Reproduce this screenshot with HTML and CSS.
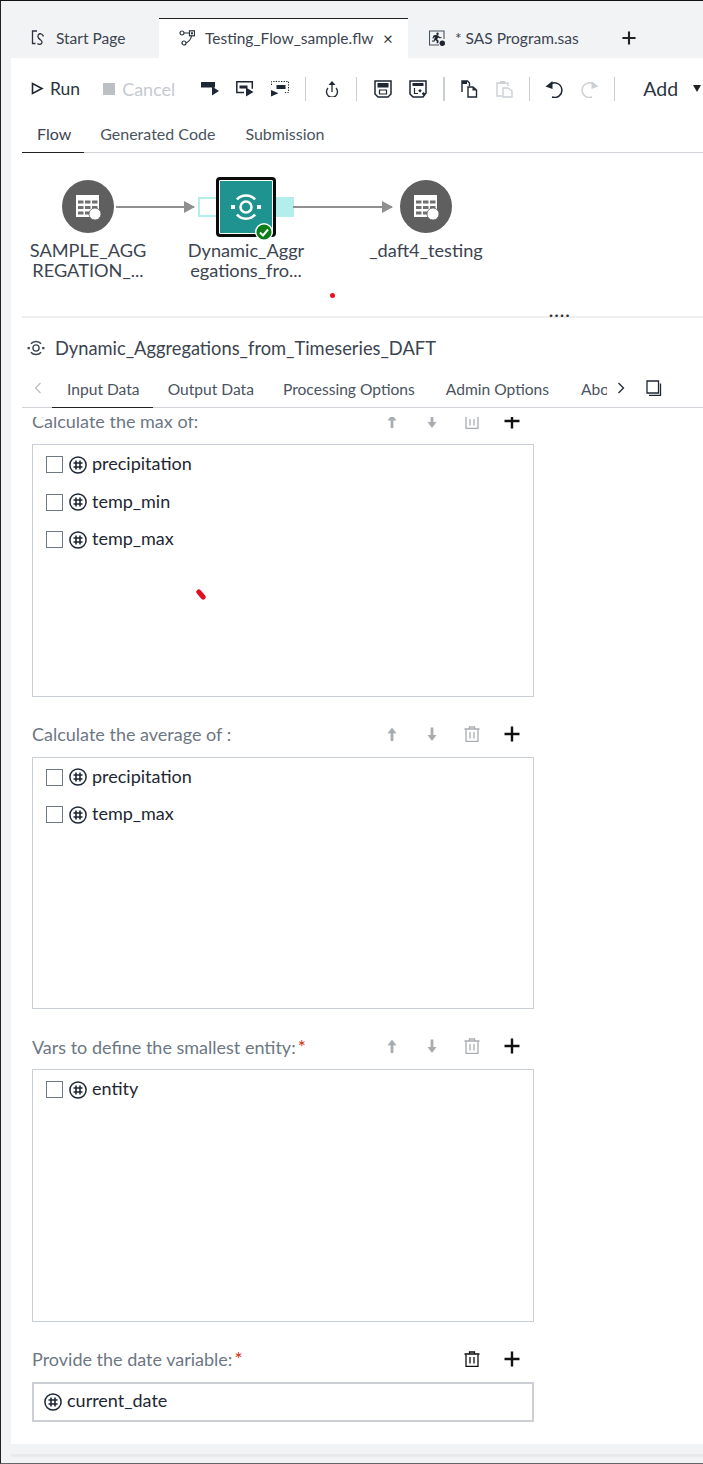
FILE: index.html
```html
<!DOCTYPE html>
<html lang="en">
<head>
<meta charset="utf-8">
<title>Testing_Flow_sample.flw</title>
<link rel="stylesheet" href="styles.css">
</head>
<body>
<svg class="defs" width="0" height="0" aria-hidden="true">
  <symbol id="i-table" viewBox="0 0 26 26">
    <path fill="#fff" d="M1 1h23v22H1z"/>
    <path fill="#6f6f6f" d="M3 6.500h5.500v3H3zM10 6.500h5.500v3H10zM17 6.500h5.500v3H17zM3 12h5.500v3H3zM10 12h5.500v3H10zM17 12h5.500v3H17zM3 17.500h5.500v3H3zM10 17.500h5.500v3H10z"/>
    <circle cx="20" cy="20" r="6" fill="#fff" stroke="#5f5f5f" stroke-width=".8"/>
  </symbol>
  <symbol id="i-step" viewBox="0 0 32 32">
    <circle cx="16" cy="16" r="5.500" fill="none" stroke="currentColor" stroke-width="2.500"/>
    <path fill="currentColor" d="M1 14h4v4H1zM27 14h4v4h-4z"/>
    <path fill="none" stroke="currentColor" stroke-width="2.500" d="M7 8.500C11 3 21 3 25 8.500M7 23.500C11 29 21 29 25 23.500"/>
  </symbol>
  <symbol id="i-hash" viewBox="0 0 18 18">
    <circle cx="9" cy="9" r="8.100" fill="none" stroke="currentColor" stroke-width="1.500"/>
    <path fill="none" stroke="currentColor" stroke-width="1.600" d="M7 4.500v9M11 4.500v9M4.500 7h9M4.500 11h9"/>
  </symbol>
  <symbol id="i-up" viewBox="0 0 16 16">
    <path fill="currentColor" d="M8 1.500l4.500 6H9.400V15H6.600V7.500H3.500z"/>
  </symbol>
  <symbol id="i-down" viewBox="0 0 16 16">
    <path fill="currentColor" d="M8 15l4.500-6H9.400V1.500H6.600V9H3.500z"/>
  </symbol>
  <symbol id="i-trash" viewBox="0 0 16 16">
    <path fill="none" stroke="currentColor" stroke-width="1.300" d="M.5 3h15M5.500 3V1h5v2M2 3v12.300h12V3M6 6v6.500M10 6v6.500"/>
  </symbol>
  <symbol id="i-plus" viewBox="0 0 16 16">
    <path fill="currentColor" d="M6.800 .5h2.400v6.300h6.300v2.400H9.200v6.300H6.800V9.200H.5V6.800h6.300z"/>
  </symbol>
</svg>

<div class="window">
  <header class="doc-tabs">
    <div class="doc-tab doc-tab-start">
      <svg class="tab-icon" viewBox="0 0 16 16" width="16" height="16"><path fill="none" stroke="#2b3440" stroke-width="1.300" d="M6 1H1.500v12.500H4.500M10.500 4C7.500 3 6 6 7.500 8s4 2.500 3.500 4.500-3 2.500-4.500 1M12.500 6.500C12 5 11.300 4.500 10.500 4"/></svg>
      <span>Start Page</span>
    </div>
    <div class="doc-tab doc-tab-active">
      <svg class="tab-icon" viewBox="0 0 16 16" width="16" height="16"><g fill="none" stroke="#2b3440" stroke-width="1.200"><circle cx="3" cy="3" r="2"/><rect x="10.500" y=".8" width="5" height="5"/><circle cx="5" cy="13" r="2"/><path d="M5 3h5.500M12.500 5.800C12 10 9 12 7 13"/></g><rect x="12" y="2.300" width="2" height="2" fill="#2b3440"/></svg>
      <span class="doc-tab-name">Testing_Flow_sample.flw</span>
      <span class="doc-close">×</span>
    </div>
    <div class="doc-tab doc-tab-sas">
      <svg class="tab-icon" viewBox="0 0 16 16" width="16" height="16"><path fill="none" stroke="#4a5360" stroke-width="1.100" d="M15 9V1H.5v14H10"/><path fill="#1c2530" d="M8.500 2.500a1.200 1.200 0 1 1 .1 2.400 1.200 1.200 0 0 1-.1-2.400zM4.500 5.500l3-.8 2 1 1.500 1.500 1.500-.3v1l-2 .4-1.500-.8-.8 2 1.500 1.300-.5 2.500H7.600l.2-2-1.600-1.200-1 1.700-2.200-.2v-1l1.500.1 1.500-3.500-1.200.3-.6 1.200-.8-.4z"/><circle cx="13.300" cy="13.300" r="2.700" fill="#1c2530"/></svg>
      <span>* SAS Program.sas</span>
    </div>
    <svg class="doc-add" viewBox="0 0 16 16" width="14" height="14"><use href="#i-plus"/></svg>
  </header>

  <main class="workspace">
    <div class="toolbar">
      <button class="tool-text">
        <svg viewBox="0 0 13 13" width="13" height="13"><path fill="none" stroke="#1e2733" stroke-width="1.600" d="M1.500 1.500v10l9.500-5z"/></svg>
        <span>Run</span>
      </button>
      <button class="tool-text tool-disabled tool-cancel">
        <span class="stop-square"></span>
        <span>Cancel</span>
      </button>
      <div class="tool-group tool-group-run">
        <svg viewBox="0 0 18 16" width="18" height="16"><path fill="#1e2733" d="M0 1h14v5.500H0zM11 5.500l7 4.500-7 4.500z"/></svg>
        <svg viewBox="0 0 18 16" width="18" height="16"><path fill="none" stroke="#1e2733" stroke-width="1.500" d="M8 11.500H.8V.8h15.500v7"/><path fill="#1e2733" d="M3.500 4.500h8v3h-8zM10 6.500l7.500 4.500-7.500 4.500z"/></svg>
        <svg viewBox="0 0 18 16" width="18" height="16"><path fill="none" stroke="#1e2733" stroke-dasharray="1.300 1.300" d="M.5 4V.5h17v11H13"/><path fill="#1e2733" d="M5.500 4h9v4h-9zM0 9l7.500 3.300L0 15.500z"/></svg>
      </div>
      <span class="tool-sep tool-sep-a"></span>
      <svg class="tool-upload" viewBox="0 0 14 16" width="14" height="16"><path fill="none" stroke="#1e2733" stroke-width="1.300" d="M3 7a5.500 5.500 0 1 0 8 0"/><path fill="none" stroke="#1e2733" stroke-width="1.300" d="M7 11V2"/><path fill="#1e2733" d="M7 0l3.500 4h-7z"/></svg>
      <span class="tool-sep tool-sep-b"></span>
      <div class="tool-group tool-group-save">
        <svg viewBox="0 0 18 18" width="18" height="18"><path fill="none" stroke="#1e2733" stroke-width="1.500" d="M1 1h16v13l-3 3H4l-3-3z"/><path fill="#1e2733" d="M3.500 3h11v4.500h-11z"/><path fill="none" stroke="#1e2733" stroke-width="1.200" d="M5.500 10h7v4h-7z"/></svg>
        <svg viewBox="0 0 18 18" width="18" height="18"><path fill="none" stroke="#1e2733" stroke-width="1.500" d="M1 1h16v12l-3 4H4l-3-3z"/><path fill="#1e2733" d="M3.500 3h11v3h-11zM11 9l1.800 1.800L11 12.600l-1.800-1.800zM14.500 12l1.800 1.800-1.800 1.800-1.800-1.800z"/><path fill="none" stroke="#1e2733" stroke-width="1.200" d="M5.500 8v5.500H9"/></svg>
      </div>
      <span class="tool-sep tool-sep-c"></span>
      <div class="tool-group tool-group-clip">
        <svg viewBox="0 0 17 18" width="17" height="18"><path fill="none" stroke="#1e2733" stroke-width="1.400" d="M1 12V1h5.500l2 2v3M7 7h5l3.500 3v7H7z"/><path fill="#1e2733" d="M1 1h5v3H1zM11.500 7l4 3.500h-4z"/></svg>
        <svg viewBox="0 0 17 18" width="17" height="18"><path fill="none" stroke="#ccd0d5" stroke-width="1.400" d="M6 16H1V3h11v3M7 8h5l4 3v6H7z"/><path fill="#ccd0d5" d="M4 1h5v3H4z"/></svg>
      </div>
      <span class="tool-sep tool-sep-d"></span>
      <div class="tool-group tool-group-undo">
        <svg viewBox="0 0 19 18" width="19" height="18"><path fill="none" stroke="#1e2733" stroke-width="1.500" d="M5 4.500a7.300 7.300 0 1 1 2 12.500"/><path fill="#1e2733" d="M.5 6.500L7.500 1v8z"/></svg>
        <svg viewBox="0 0 19 18" width="19" height="18"><path fill="none" stroke="#ccd0d5" stroke-width="1.500" d="M14 4.500a7.300 7.300 0 1 0-2 12.500"/><path fill="#ccd0d5" d="M18.500 6.500L11.500 1v8z"/></svg>
      </div>
      <span class="tool-sep tool-sep-e"></span>
      <span class="tool-add">Add</span>
      <span class="tool-caret"></span>
    </div>

    <nav class="sub-tabs">
      <span class="sub-tab sub-tab-active">Flow</span>
      <span class="sub-tab">Generated Code</span>
      <span class="sub-tab">Submission</span>
    </nav>

    <section class="canvas">
      <div class="node-circle node-a"><svg width="26" height="26"><use href="#i-table"/></svg></div>
      <div class="edge edge-a"></div>
      <div class="port port-in"></div>
      <div class="step">
        <svg class="step-icon" width="32" height="32"><use href="#i-step"/></svg>
        <svg class="step-ok" viewBox="0 0 18 18" width="18" height="18"><circle cx="9" cy="9" r="8.300" fill="#0d7d1a" stroke="#fff" stroke-width="1.400"/><path fill="none" stroke="#fff" stroke-width="2" d="M5 9.500l3 3 5-6"/></svg>
      </div>
      <div class="port port-out"></div>
      <div class="edge edge-b"></div>
      <div class="node-circle node-c"><svg width="26" height="26"><use href="#i-table"/></svg></div>
      <div class="node-label label-a">SAMPLE_AGG<br>REGATION_...</div>
      <div class="node-label label-b">Dynamic_Aggr<br>egations_fro...</div>
      <div class="node-label label-c">_daft4_testing</div>
      <span class="red-dot"></span>
      <span class="grip">....</span>
    </section>

    <div class="panel-title">
      <svg class="panel-icon" width="18" height="18"><use href="#i-step"/></svg>
      <span>Dynamic_Aggregations_from_Timeseries_DAFT</span>
    </div>

    <nav class="panel-tabs">
      <svg class="chev chev-left" viewBox="0 0 8 12" width="8" height="12"><path fill="none" stroke="#b9bec5" stroke-width="1.300" d="M6.500 1L1.500 6l5 5"/></svg>
      <span class="panel-tab panel-tab-active">Input Data</span>
      <span class="panel-tab panel-tab-output">Output Data</span>
      <span class="panel-tab panel-tab-processing">Processing Options</span>
      <span class="panel-tab panel-tab-admin">Admin Options</span>
      <span class="panel-tab panel-tab-cut">About</span>
      <svg class="chev chev-right" viewBox="0 0 8 12" width="8" height="12"><path fill="none" stroke="#1e2733" stroke-width="1.300" d="M1.500 1l5 5-5 5"/></svg>
      <svg class="panel-copy" viewBox="0 0 16 16" width="16" height="16"><path fill="none" stroke="#1e2733" stroke-width="1.300" d="M1 1h11.500v12H1z"/><path fill="none" stroke="#1e2733" stroke-width="1.300" d="M14.500 3.500v11.800H3"/></svg>
    </nav>

    <div class="form-view">
      <div class="form">
        <div class="field">
          <div class="field-head">
            <span class="field-label">Calculate the max of:</span>
            <div class="field-actions">
              <svg class="muted" width="16" height="16"><use href="#i-up"/></svg>
              <svg class="muted" width="16" height="16"><use href="#i-down"/></svg>
              <svg class="muted" width="16" height="16"><use href="#i-trash"/></svg>
              <svg width="16" height="16"><use href="#i-plus"/></svg>
            </div>
          </div>
          <ul class="var-list">
            <li class="var"><span class="check"></span><svg width="18" height="18"><use href="#i-hash"/></svg><span class="var-name">precipitation</span></li>
            <li class="var"><span class="check"></span><svg width="18" height="18"><use href="#i-hash"/></svg><span class="var-name">temp_min</span></li>
            <li class="var"><span class="check"></span><svg width="18" height="18"><use href="#i-hash"/></svg><span class="var-name">temp_max</span></li>
          </ul>
        </div>
        <div class="field">
          <div class="field-head">
            <span class="field-label">Calculate the average of :</span>
            <div class="field-actions">
              <svg class="muted" width="16" height="16"><use href="#i-up"/></svg>
              <svg class="muted" width="16" height="16"><use href="#i-down"/></svg>
              <svg class="muted" width="16" height="16"><use href="#i-trash"/></svg>
              <svg width="16" height="16"><use href="#i-plus"/></svg>
            </div>
          </div>
          <ul class="var-list">
            <li class="var"><span class="check"></span><svg width="18" height="18"><use href="#i-hash"/></svg><span class="var-name">precipitation</span></li>
            <li class="var"><span class="check"></span><svg width="18" height="18"><use href="#i-hash"/></svg><span class="var-name">temp_max</span></li>
          </ul>
        </div>
        <div class="field">
          <div class="field-head">
            <span class="field-label">Vars to define the smallest entity:<span class="req">*</span></span>
            <div class="field-actions">
              <svg class="muted" width="16" height="16"><use href="#i-up"/></svg>
              <svg class="muted" width="16" height="16"><use href="#i-down"/></svg>
              <svg class="muted" width="16" height="16"><use href="#i-trash"/></svg>
              <svg width="16" height="16"><use href="#i-plus"/></svg>
            </div>
          </div>
          <ul class="var-list">
            <li class="var"><span class="check"></span><svg width="18" height="18"><use href="#i-hash"/></svg><span class="var-name">entity</span></li>
          </ul>
        </div>
        <div class="field">
          <div class="field-head">
            <span class="field-label">Provide the date variable:<span class="req">*</span></span>
            <div class="field-actions">
              <svg width="16" height="16"><use href="#i-trash"/></svg>
              <svg width="16" height="16"><use href="#i-plus"/></svg>
            </div>
          </div>
          <div class="date-input"><svg width="18" height="18"><use href="#i-hash"/></svg><span class="var-name">current_date</span></div>
        </div>
      </div>
      <span class="red-stroke"></span>
    </div>
  </main>
  <div class="h-scroll"></div>
</div>
</body>
</html>
```

FILE: styles.css
```css
* { box-sizing: border-box; }
html, body { margin: 0; padding: 0; }
body {
  width: 703px;
  height: 1464px;
  overflow: hidden;
  font-family: Lato, "Open Sans", sans-serif;
  color: #2b3440;
}
.defs { position: absolute; }
svg { display: block; flex: none; }
.window {
  position: relative;
  width: 703px;
  height: 1464px;
  display: flex;
  flex-direction: column;
  background: #f2f3f5;
  border-top: 1px solid #111;
  border-left: 1px solid #222;
  border-bottom: 1px solid #666;
}
.doc-tabs {
  height: 57px;
  flex: none;
  display: flex;
  align-items: flex-end;
  font-size: 15.500px;
  color: #3b4450;
}
.doc-tab {
  height: 40px;
  display: flex;
  align-items: center;
  white-space: nowrap;
}
.doc-tab-start { width: 158px; padding-left: 30px; gap: 9px; }
.doc-tab-active {
  width: 249px;
  padding: 0 0 1px 20px;
  gap: 10px;
  background: #fff;
  border-top: 1px solid #222;
}
.doc-tab-name { width: 178px; }
.doc-close { font-size: 17px; color: #333; margin-left: -10px; }
.doc-tab-sas { padding-left: 21px; gap: 10px; width: 214px; }
.doc-add { margin-bottom: 13px; color: #222; }

.workspace {
  position: relative;
  margin-left: 10px;
  height: 1386px;
  flex: none;
  background: #fff;
  display: flex;
  flex-direction: column;
  overflow: hidden;
}
.toolbar {
  height: 61px;
  flex: none;
  display: flex;
  align-items: center;
  padding-left: 20px;
}
.tool-text {
  all: unset;
  display: flex;
  align-items: center;
  gap: 6px;
  font-size: 17.500px;
  color: #2b3440;
}
.tool-cancel { margin-left: 23px; gap: 7px; font-size: 18px; }
.tool-disabled { color: #c6cacf; }
.stop-square { width: 12px; height: 12px; background: #bcbfc4; }
.tool-group { display: flex; align-items: center; }
.tool-group-run { margin-left: 26px; gap: 17px; }
.tool-sep { width: 1px; height: 24px; background: #c9ced4; flex: none; }
.tool-sep-a { margin-left: 16px; }
.tool-upload { margin-left: 19px; }
.tool-sep-b { margin-left: 17px; }
.tool-group-save { margin-left: 17px; gap: 17px; }
.tool-sep-c { margin-left: 16px; width: 2px; }
.tool-group-clip { margin-left: 16px; gap: 18px; }
.tool-sep-d { margin-left: 16px; }
.tool-group-undo { margin-left: 15px; gap: 16px; }
.tool-sep-e { margin-left: 15px; }
.tool-add { margin-left: 28px; font-size: 19.500px; color: #2b3440; }
.tool-caret {
  margin-left: 15px;
  width: 0; height: 0;
  border-left: 4.500px solid transparent;
  border-right: 4.500px solid transparent;
  border-top: 7px solid #222;
}

.sub-tabs {
  height: 34px;
  flex: none;
  margin-left: 11px;
  display: flex;
  align-items: stretch;
  border-bottom: 1px solid #d0d3d8;
  font-size: 16px;
  color: #4a5360;
}
.sub-tab { display: flex; align-items: center; padding: 0 15px 5px; white-space: nowrap; height: 34px; }
.sub-tab-active { border-bottom: 1px solid #222; color: #3b4450; padding-right: 13px; margin-right: 1px; }

.canvas {
  position: relative;
  height: 165px;
  flex: none;
  margin-left: 11px;
  border-bottom: 2px solid #eeeff0;
}
.node-circle {
  position: absolute;
  width: 52px;
  height: 53px;
  border-radius: 50%;
  background: #5f5f5f;
  display: flex;
  align-items: center;
  justify-content: center;
}
.node-a { left: 40px; top: 27px; }
.node-c { left: 378px; top: 27px; }
.edge { position: absolute; height: 2px; top: 53px; background: #8f8f8f; }
.edge::after {
  content: "";
  position: absolute;
  right: -1px;
  top: -5px;
  border-left: 11px solid #8f8f8f;
  border-top: 6px solid transparent;
  border-bottom: 6px solid transparent;
}
.edge-a { left: 94px; width: 78px; }
.edge-b { left: 271px; width: 99px; }
.port { position: absolute; top: 44px; width: 18px; height: 20px; border: 2px solid #b2eeec; }
.port-in { left: 176px; background: #fff; border-right: 0; }
.port-out { left: 254px; background: #b2eeec; }
.step {
  position: absolute;
  left: 194px;
  top: 24px;
  width: 60px;
  height: 60px;
  border: 3px solid #0b0b0b;
  border-radius: 4px;
  background: #1f938f;
  box-shadow: inset 0 0 0 1px #fff;
  display: flex;
  align-items: center;
  justify-content: center;
  color: #fff;
}
.step-ok { position: absolute; right: 0; bottom: -7px; }
.node-label {
  position: absolute;
  width: 130px;
  top: 87px;
  text-align: center;
  font-size: 18.200px;
  line-height: 20px;
  color: #3b4450;
  white-space: nowrap;
}
.label-a { left: 1px; }
.label-b { left: 159px; }
.label-c { left: 339px; }
.red-dot {
  position: absolute;
  left: 308px;
  top: 140px;
  width: 5px;
  height: 5px;
  border-radius: 50%;
  background: #e8101c;
}
.grip {
  position: absolute;
  left: 527px;
  top: 151px;
  font-size: 17px;
  font-weight: 700;
  line-height: 14px;
  letter-spacing: 1.500px;
  color: #333;
}

.panel-title {
  height: 55px;
  flex: none;
  display: flex;
  align-items: center;
  padding: 4px 0 0 16px;
  gap: 10px;
  font-size: 18.300px;
  color: #3b4450;
  white-space: nowrap;
}
.panel-tabs {
  position: relative;
  height: 35px;
  flex: none;
  margin-left: 11px;
  display: flex;
  align-items: stretch;
  border-bottom: 1px solid #d0d3d8;
  font-size: 15.600px;
  color: #4a5360;
}
.chev { align-self: center; margin-bottom: 4px; }
.chev-left { margin-left: 12px; margin-right: 10px; }
.panel-tab { display: flex; align-items: center; padding: 0 15px 3px; white-space: nowrap; height: 35px; }
.panel-tab-active { border-bottom: 1px solid #222; padding-right: 13px; }
.panel-tab-output { padding-right: 14px; }
.panel-tab-processing { padding-right: 16px; }
.panel-tab-admin { padding-right: 17px; }
.panel-tab-cut { width: 41px; overflow: hidden; padding-right: 0; display: block; line-height: 32px; }
.chev-right { margin-left: 10px; }
.panel-copy { align-self: center; margin-left: 21px; margin-bottom: 4px; }

.form-view {
  position: relative;
  flex: 1;
  min-height: 0;
  margin-top: 9px;
  overflow: hidden;
}
.form {
  margin-top: -10px;
  padding-left: 21px;
  width: 523px;
  display: flex;
  flex-direction: column;
}
.field { height: 312.500px; flex: none; }
.field-head {
  height: 37px;
  display: flex;
  align-items: center;
  justify-content: space-between;
  padding: 0 14px 9px 0;
  font-size: 18px;
}
.field-label { color: #6d7784; white-space: nowrap; }
.req { color: #d12c0a; margin-left: 2px; font-size: 19px; }
.field-actions { display: flex; gap: 24px; color: #111; }
.muted { color: #a9adb2; }
.var-list {
  margin: 0;
  list-style: none;
  height: 252.500px;
  border: 1px solid #c9ced4;
  padding: 1px 0 0 13px;
}
.var {
  height: 37.500px;
  display: flex;
  align-items: center;
  gap: 5px;
  font-size: 18px;
  color: #1e2733;
}
.var-name { padding-bottom: 3px; }
.check { width: 17px; height: 17px; border: 1px solid #6f7986; flex: none; margin-right: 1px; }
.date-input {
  height: 40px;
  border: 2px solid #ccd0d6;
  padding-left: 10px;
  display: flex;
  align-items: center;
  gap: 5px;
  font-size: 18px;
  color: #1e2733;
}
.field:last-child { height: auto; }
.red-stroke {
  position: absolute;
  left: 184px;
  top: 175px;
  width: 12px;
  height: 5px;
  border-radius: 2.500px;
  background: #e01020;
  transform: rotate(50deg);
}
.h-scroll {
  position: absolute;
  left: 10px;
  right: 0;
  bottom: 6px;
  height: 3px;
  background: #e9eaec;
}
```
